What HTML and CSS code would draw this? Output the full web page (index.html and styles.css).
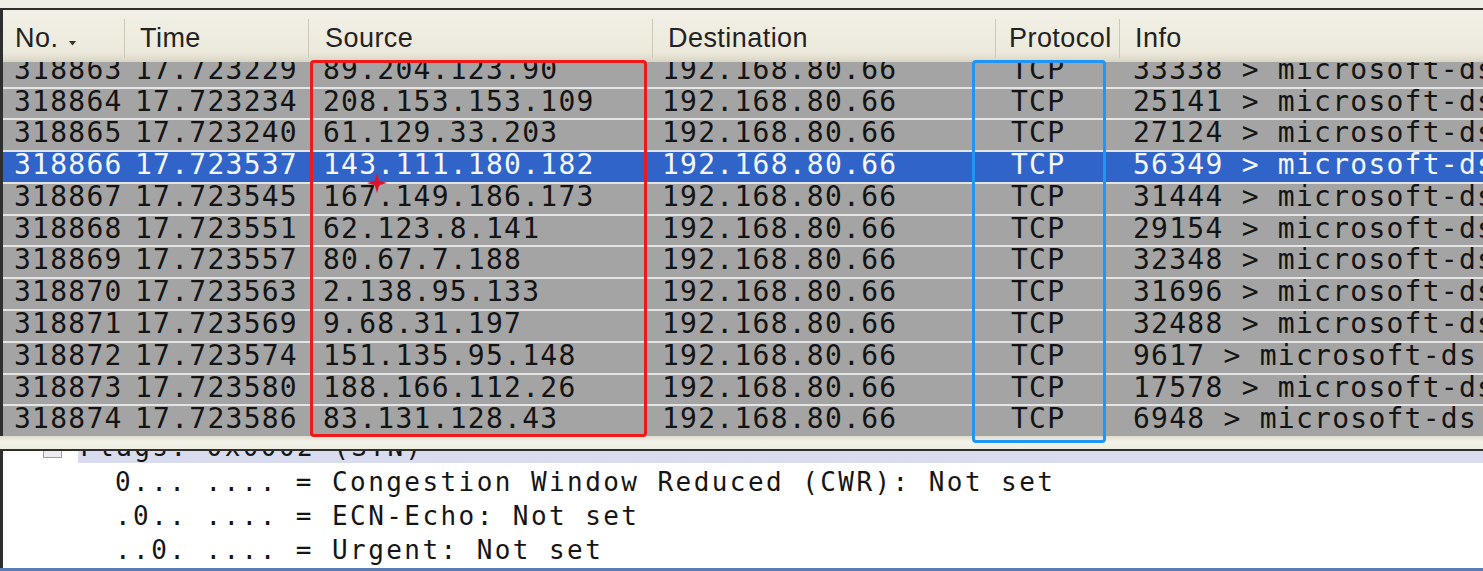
FILE: index.html
```html
<!DOCTYPE html>
<html>
<head>
<meta charset="utf-8">
<title>Packet list</title>
<link rel="stylesheet" href="styles.css">
</head>
<body>
<div class="screen">
  <div class="topstrip"></div>
  <div class="list">
    <div class="header">
      <div class="hcell c-no">No.<svg class="sort" width="7" height="5" viewBox="0 0 7 5"><path d="M0 0H7L3.5 4.5Z" fill="#333"/></svg></div>
      <div class="hcell c-time">Time</div>
      <div class="hcell c-src">Source</div>
      <div class="hcell c-dst">Destination</div>
      <div class="hcell c-proto">Protocol</div>
      <div class="hcell c-info">Info</div>
    </div>
    <div class="rows">
      <div class="rows-inner">
        <div class="row"><span class="cell c-no">318863</span><span class="cell c-time">17.723229</span><span class="cell c-src">89.204.123.90</span><span class="cell c-dst">192.168.80.66</span><span class="cell c-proto">TCP</span><span class="cell c-info">33338 &gt; microsoft-ds [SYN] Seq=0 Win=16384 Len=0</span></div>
        <div class="row"><span class="cell c-no">318864</span><span class="cell c-time">17.723234</span><span class="cell c-src">208.153.153.109</span><span class="cell c-dst">192.168.80.66</span><span class="cell c-proto">TCP</span><span class="cell c-info">25141 &gt; microsoft-ds [SYN] Seq=0 Win=16384 Len=0</span></div>
        <div class="row"><span class="cell c-no">318865</span><span class="cell c-time">17.723240</span><span class="cell c-src">61.129.33.203</span><span class="cell c-dst">192.168.80.66</span><span class="cell c-proto">TCP</span><span class="cell c-info">27124 &gt; microsoft-ds [SYN] Seq=0 Win=16384 Len=0</span></div>
        <div class="row sel"><span class="cell c-no">318866</span><span class="cell c-time">17.723537</span><span class="cell c-src">143.111.180.182</span><span class="cell c-dst">192.168.80.66</span><span class="cell c-proto">TCP</span><span class="cell c-info">56349 &gt; microsoft-ds [SYN] Seq=0 Win=16384 Len=0</span></div>
        <div class="row"><span class="cell c-no">318867</span><span class="cell c-time">17.723545</span><span class="cell c-src">167.149.186.173</span><span class="cell c-dst">192.168.80.66</span><span class="cell c-proto">TCP</span><span class="cell c-info">31444 &gt; microsoft-ds [SYN] Seq=0 Win=16384 Len=0</span></div>
        <div class="row"><span class="cell c-no">318868</span><span class="cell c-time">17.723551</span><span class="cell c-src">62.123.8.141</span><span class="cell c-dst">192.168.80.66</span><span class="cell c-proto">TCP</span><span class="cell c-info">29154 &gt; microsoft-ds [SYN] Seq=0 Win=16384 Len=0</span></div>
        <div class="row"><span class="cell c-no">318869</span><span class="cell c-time">17.723557</span><span class="cell c-src">80.67.7.188</span><span class="cell c-dst">192.168.80.66</span><span class="cell c-proto">TCP</span><span class="cell c-info">32348 &gt; microsoft-ds [SYN] Seq=0 Win=16384 Len=0</span></div>
        <div class="row"><span class="cell c-no">318870</span><span class="cell c-time">17.723563</span><span class="cell c-src">2.138.95.133</span><span class="cell c-dst">192.168.80.66</span><span class="cell c-proto">TCP</span><span class="cell c-info">31696 &gt; microsoft-ds [SYN] Seq=0 Win=16384 Len=0</span></div>
        <div class="row"><span class="cell c-no">318871</span><span class="cell c-time">17.723569</span><span class="cell c-src">9.68.31.197</span><span class="cell c-dst">192.168.80.66</span><span class="cell c-proto">TCP</span><span class="cell c-info">32488 &gt; microsoft-ds [SYN] Seq=0 Win=16384 Len=0</span></div>
        <div class="row"><span class="cell c-no">318872</span><span class="cell c-time">17.723574</span><span class="cell c-src">151.135.95.148</span><span class="cell c-dst">192.168.80.66</span><span class="cell c-proto">TCP</span><span class="cell c-info">9617 &gt; microsoft-ds [SYN] Seq=0 Win=16384 Len=0</span></div>
        <div class="row"><span class="cell c-no">318873</span><span class="cell c-time">17.723580</span><span class="cell c-src">188.166.112.26</span><span class="cell c-dst">192.168.80.66</span><span class="cell c-proto">TCP</span><span class="cell c-info">17578 &gt; microsoft-ds [SYN] Seq=0 Win=16384 Len=0</span></div>
        <div class="row"><span class="cell c-no">318874</span><span class="cell c-time">17.723586</span><span class="cell c-src">83.131.128.43</span><span class="cell c-dst">192.168.80.66</span><span class="cell c-proto">TCP</span><span class="cell c-info">6948 &gt; microsoft-ds [SYN] Seq=0 Win=16384 Len=0</span></div>
      </div>
    </div>
  </div>
  <div class="splitter"></div>
  <div class="detail">
    <div class="tree">
      <div class="tline flags"><span class="expander"></span><span class="flagslabel">Flags: 0x0002 (SYN)</span></div>
      <div class="tline plain">0... .... = Congestion Window Reduced (CWR): Not set</div>
      <div class="tline plain">.0.. .... = ECN-Echo: Not set</div>
      <div class="tline plain">..0. .... = Urgent: Not set</div>
    </div>
  </div>
  <div class="frame-bottom"></div>

  <div class="mark mark-red"></div>
  <div class="mark mark-blue"></div>
  <svg class="star" width="22" height="22" viewBox="0 0 22 22"><path d="M11 1L13.2 8.8L21 11L13.2 13.2L11 21L8.8 13.2L1 11L8.8 8.8Z" fill="#e0122c"/></svg>
</div>
</body>
</html>
```

FILE: styles.css
```css
* { box-sizing: border-box; }
html, body { margin: 0; padding: 0; }
body {
  width: 1483px;
  height: 571px;
  overflow: hidden;
  background: #efeee4;
  font-family: "DejaVu Sans Mono", monospace;
}
.screen {
  position: relative;
  width: 1483px;
  height: 571px;
  display: flex;
  flex-direction: column;
}
.topstrip {
  flex: none;
  height: 8px;
  background: #f0efe6;
}
.list {
  flex: none;
  border-top: 2px solid #2e2e2e;
  border-left: 3px solid #2e2e2e;
}
.header {
  display: flex;
  height: 52px;
  background: linear-gradient(#f2f0e6, #ece9dc 82%, #d9d5c5);
  font-family: "Liberation Sans", Arial, sans-serif;
  font-size: 27px;
  letter-spacing: 0.45px;
  color: #222;
}
.hcell {
  position: relative;
  flex: none;
  padding-top: 4px;
  line-height: 48px;
  white-space: nowrap;
  overflow: hidden;
}
.hcell::after {
  content: "";
  position: absolute;
  right: -1px;
  top: 9px;
  bottom: 4px;
  width: 2px;
  border-left: 1px solid #cdc9b9;
  border-right: 1px solid #fbfaf4;
}
.hcell.c-info::after { display: none; }
.sort { margin-left: 11px; vertical-align: 1px; }

.c-no { width: 124px; }
.c-time { width: 184px; }
.c-src { width: 344px; }
.c-dst { width: 343px; }
.c-proto { width: 124px; }
.c-info { flex: 1 1 auto; min-width: 0; }

.hcell.c-no { padding-left: 12px; }
.hcell.c-time { padding-left: 13px; }
.hcell.c-src { padding-left: 14px; }
.hcell.c-dst { padding-left: 13px; }
.hcell.c-proto { padding-left: 11px; }
.hcell.c-info { padding-left: 13px; }

.rows {
  height: 374px;
  overflow: hidden;
  background: #a4a4a4;
}
.rows-inner { margin-top: -7.3px; }
.row {
  display: flex;
  height: 31.8px;
  border-top: 2.5px solid #e4e4e4;
  padding-bottom: 4.6px;
  background: #a4a4a4;
  color: #141414;
  font-size: 28px;
  letter-spacing: 1.25px;
  line-height: 25.5px;
  white-space: nowrap;
}
.row.sel {
  background: #3164c9;
  color: #f4f7ff;
}
.cell { flex: none; overflow: hidden; }
.cell.c-info { flex: 1 1 auto; }
.cell.c-no { padding-left: 11px; }
.cell.c-time { padding-left: 8px; }
.cell.c-src { padding-left: 12px; }
.cell.c-dst { padding-left: 7px; }
.cell.c-proto { padding-left: 13px; }
.cell.c-info { padding-left: 11px; }

.splitter {
  flex: none;
  height: 13px;
  background: linear-gradient(#dedccd, #f4f3ea 45%, #eeede0);
}
.detail {
  flex: none;
  height: 119px;
  border-top: 2px solid #2e2e2e;
  border-left: 3px solid #2e2e2e;
  background: #ffffff;
  overflow: hidden;
}
.tree {
  margin-top: -18.8px;
  font-size: 26px;
  letter-spacing: 2.43px;
  color: #151515;
}
.tline {
  display: flex;
  height: 34px;
  line-height: 32px;
  white-space: nowrap;
}
.tline.plain { padding-left: 112px; }
.expander {
  flex: none;
  margin-left: 40px;
  margin-top: 6.8px;
  width: 19px;
  height: 19px;
  border: 1px solid #9c9c9c;
  background: #ececec;
}
.flagslabel {
  flex: 1 1 auto;
  margin-left: 16px;
  padding-left: 2px;
  height: 31px;
  line-height: 31px;
  background: #d9dbef;
}
.frame-bottom {
  flex: none;
  height: 3px;
  background: #5a7bb5;
}

.mark {
  position: absolute;
  border-width: 3px;
  border-style: solid;
  border-radius: 4px;
}
.mark-red {
  left: 310px;
  top: 60px;
  width: 337px;
  height: 377px;
  border-color: #f01818;
}
.mark-blue {
  left: 972px;
  top: 60px;
  width: 134px;
  height: 383px;
  border-color: #1f95f5;
}
.star {
  position: absolute;
  left: 366px;
  top: 172px;
}
```
